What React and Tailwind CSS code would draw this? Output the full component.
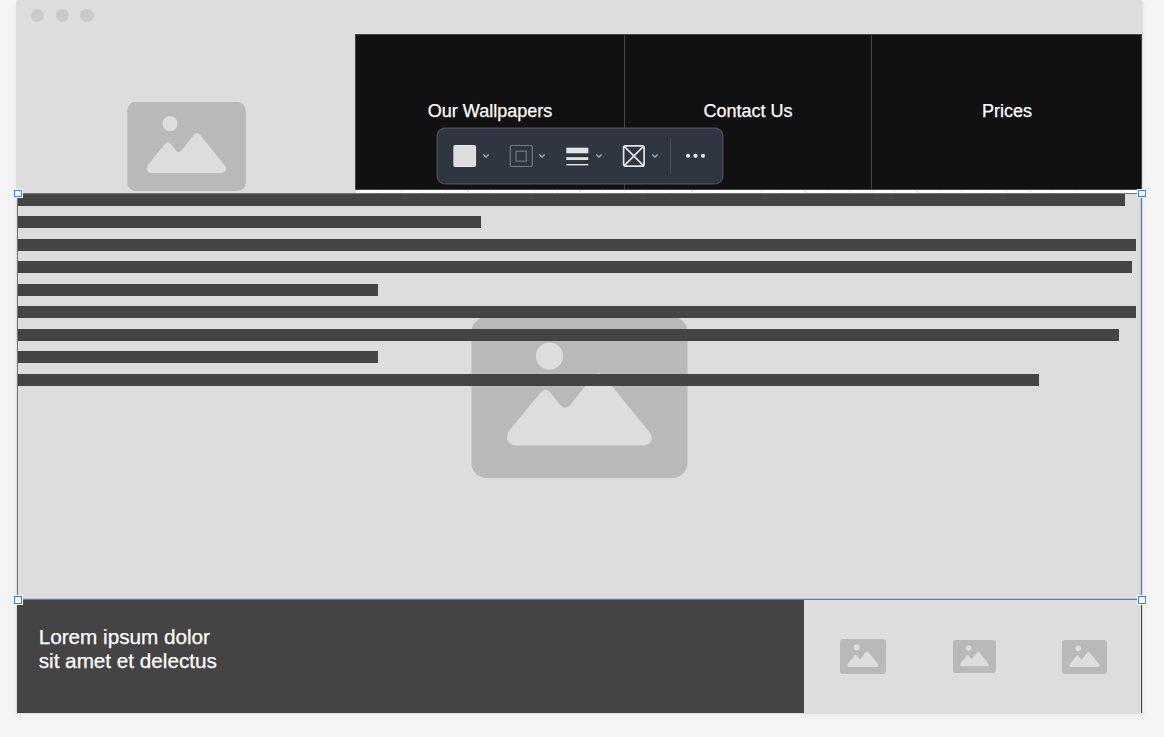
import React from "react";

const bars = [
  "h-[12px] w-[1107px]",
  "mt-[10px] h-[12px] w-[463px]",
  "mt-[11px] h-[12px] w-[1118px]",
  "mt-[10px] h-[12px] w-[1114px]",
  "mt-[11px] h-[12px] w-[360px]",
  "mt-[10px] h-[12px] w-[1118px]",
  "mt-[11px] h-[12px] w-[1101px]",
  "mt-[10px] h-[12px] w-[360px]",
  "mt-[11px] h-[12px] w-[1021px]",
];

function Picture({ className, inset = 0 }) {
  return (
    <svg viewBox={`${-inset} 0 ${216 + inset * 2} 160.5`} preserveAspectRatio="none" className={`block shrink-0 ${className}`}>
      <rect width="216" height="160.5" rx="15" fill="#b9b9b9" />
      <circle cx="78" cy="39" r="13.6" fill="#ddd" />
      <path
        d="M38 113 L69 75.5 Q74 69.5 79 75.5 L89 88 Q93.5 93 98.5 88 L121.5 59 Q127 53 132.500 59 L178 115 C183 121 179 128 172 128 H44 C36 128 33 119 38 113 Z"
        fill="#ddd"
      />
    </svg>
  );
}

function Chevron({ className }) {
  return (
    <svg viewBox="0 0 8 8" className={`h-2 w-2 shrink-0 ${className}`} fill="none" stroke="#a5a8ae" strokeWidth="1.4">
      <path d="M1.300 2.600 L4 5.100 L6.700 2.600" />
    </svg>
  );
}

function Toolbar() {
  return (
    <div className="absolute left-[437px] top-[128px] flex h-[56px] w-[286px] items-center rounded-lg bg-[#2f3541] pl-4 shadow-[0_0_0_0.5px_#4c5568,inset_0_0_0_0.75px_#4c5568]">
      <svg viewBox="0 0 24 24" className="h-6 w-6 shrink-0">
        <rect x="0.900" y="1.500" width="21.700" height="21" rx="1" fill="#ddd" stroke="#e8e8e8" />
      </svg>
      <Chevron className="ml-[5px]" />
      <svg viewBox="0 0 24 24" className="ml-[19px] h-6 w-6 shrink-0" fill="none" stroke="#747982" strokeWidth="1.2">
        <rect x="1.300" y="1.500" width="22" height="21" rx="1.500" />
        <rect x="7" y="7.200" width="10.300" height="10" />
      </svg>
      <Chevron className="ml-[5px]" />
      <svg viewBox="0 0 23 24" className="ml-[20px] h-6 w-[23px] shrink-0" fill="#e4e4e4">
        <rect x="0.300" y="3.700" width="22" height="5.600" />
        <rect x="0.300" y="13.200" width="22" height="2.800" />
        <rect x="0.300" y="20" width="22" height="1.400" />
      </svg>
      <Chevron className="ml-[6px]" />
      <svg viewBox="0 0 24 24" className="ml-[19px] h-6 w-6 shrink-0" fill="none" stroke="#e4e4e4" strokeWidth="1.700">
        <rect x="1.600" y="1.800" width="20.500" height="20.400" rx="2" />
        <path d="M2 2.200 L21.700 21.800 M21.700 2.200 L2 21.800" />
      </svg>
      <Chevron className="ml-[5px]" />
      <div className="ml-[11px] h-9 w-px shrink-0 bg-[#494f5a]" />
      <svg viewBox="0 0 22 8" className="ml-[14px] h-2 w-[22px] shrink-0" fill="#e4e4e4">
        <circle cx="3" cy="3.800" r="2.100" />
        <circle cx="10.500" cy="3.800" r="2.100" />
        <circle cx="18" cy="3.800" r="2.100" />
      </svg>
    </div>
  );
}

function Handle({ className }) {
  return (
    <div className={`absolute border border-[#3f7ae8] bg-white outline outline-1 outline-white ${className}`} />
  );
}

export default function App() {
  return (
    <div className="relative h-[737px] w-[1164px] overflow-hidden bg-[#f5f5f5] pl-4 font-['Liberation_Sans',sans-serif]">
      <main className="flex h-[714px] w-[1127px] flex-col rounded-t-[3px] bg-[#ddd] shadow-[0_1px_8px_rgba(0,0,0,0.05)]">
        <div className="flex h-[34px] items-start gap-[11px] pl-[15px] pt-[9px]">
          <span className="h-[13px] w-[13px] rounded-full bg-[#cacaca]" />
          <span className="ml-[1px] h-[13px] w-[13px] rounded-full bg-[#cacaca]" />
          <span className="h-[13px] w-[14px] rounded-full bg-[#cacaca]" />
        </div>
        <header className="flex h-[159px]">
          <div className="w-[339px] pl-[111px] pt-[68px]">
            <Picture inset={0.5} className="h-[89px] w-[119px]" />
          </div>
          <div className="flex w-[787px] flex-col">
            <nav className="flex h-[156px] border border-[#444] bg-[#111] text-[18px] leading-[152px] text-white [-webkit-text-stroke:0.250px_white]">
              <a className="w-[269px] border-r border-[#444] text-center">Our Wallpapers</a>
              <a className="w-[247px] border-r border-[#444] text-center">Contact Us</a>
              <a className="flex-1 pl-px text-center">Prices</a>
            </nav>
            <div className="ml-px h-[3px] bg-white bg-[repeating-linear-gradient(90deg,transparent_0,transparent_111px,#dedede_111px,#dedede_112px,transparent_112px,transparent_112.500px),repeating-linear-gradient(90deg,transparent_0,transparent_21.500px,#f1f1f1_21.500px,#f1f1f1_22.500px)]" />
          </div>
        </header>
        <section className="grid h-[407px] pl-[2px] pt-px">
          <div className="col-start-1 row-start-1 pl-[453px] pt-[123px]">
            <Picture inset={0.5} className="h-[161px] w-[217px]" />
          </div>
          <div className="col-start-1 row-start-1">
            {bars.map((b, i) => (
              <div key={i} className={`bg-[#444] ${b}`} />
            ))}
          </div>
        </section>
        <footer className="ml-px mr-px flex h-[113px] border-r border-[#444]">
          <p className="w-[787px] bg-[#444] pl-[21.700px] pt-[25px] text-[20.700px] leading-[24px] text-white [-webkit-text-stroke:0.250px_white]">
            Lorem ipsum dolor
            <br />
            sit amet et delectus
          </p>
          <div className="flex flex-1 items-start pl-[36px] pt-[39px]">
            <Picture className="h-[35px] w-[46px]" />
            <Picture className="ml-[67px] mt-[1px] h-[33px] w-[43px]" />
            <Picture className="ml-[66px] mt-[0.500px] h-[34px] w-[45px]" />
          </div>
        </footer>
      </main>
      <div className="absolute left-[17px] top-[193px] h-[407px] w-[1125px] border border-[#3f7ae8] shadow-[inset_-1px_-1px_0_rgba(63,122,232,0.2)]" />
      <Handle className="left-[14px] top-[190px] h-[7px] w-[8px]" />
      <Handle className="left-[1138px] top-[190px] h-[7px] w-[8px]" />
      <Handle className="left-[14px] top-[596px] h-[8px] w-[8px]" />
      <Handle className="left-[1138px] top-[596px] h-[8px] w-[8px]" />
      <Toolbar />
    </div>
  );
}
